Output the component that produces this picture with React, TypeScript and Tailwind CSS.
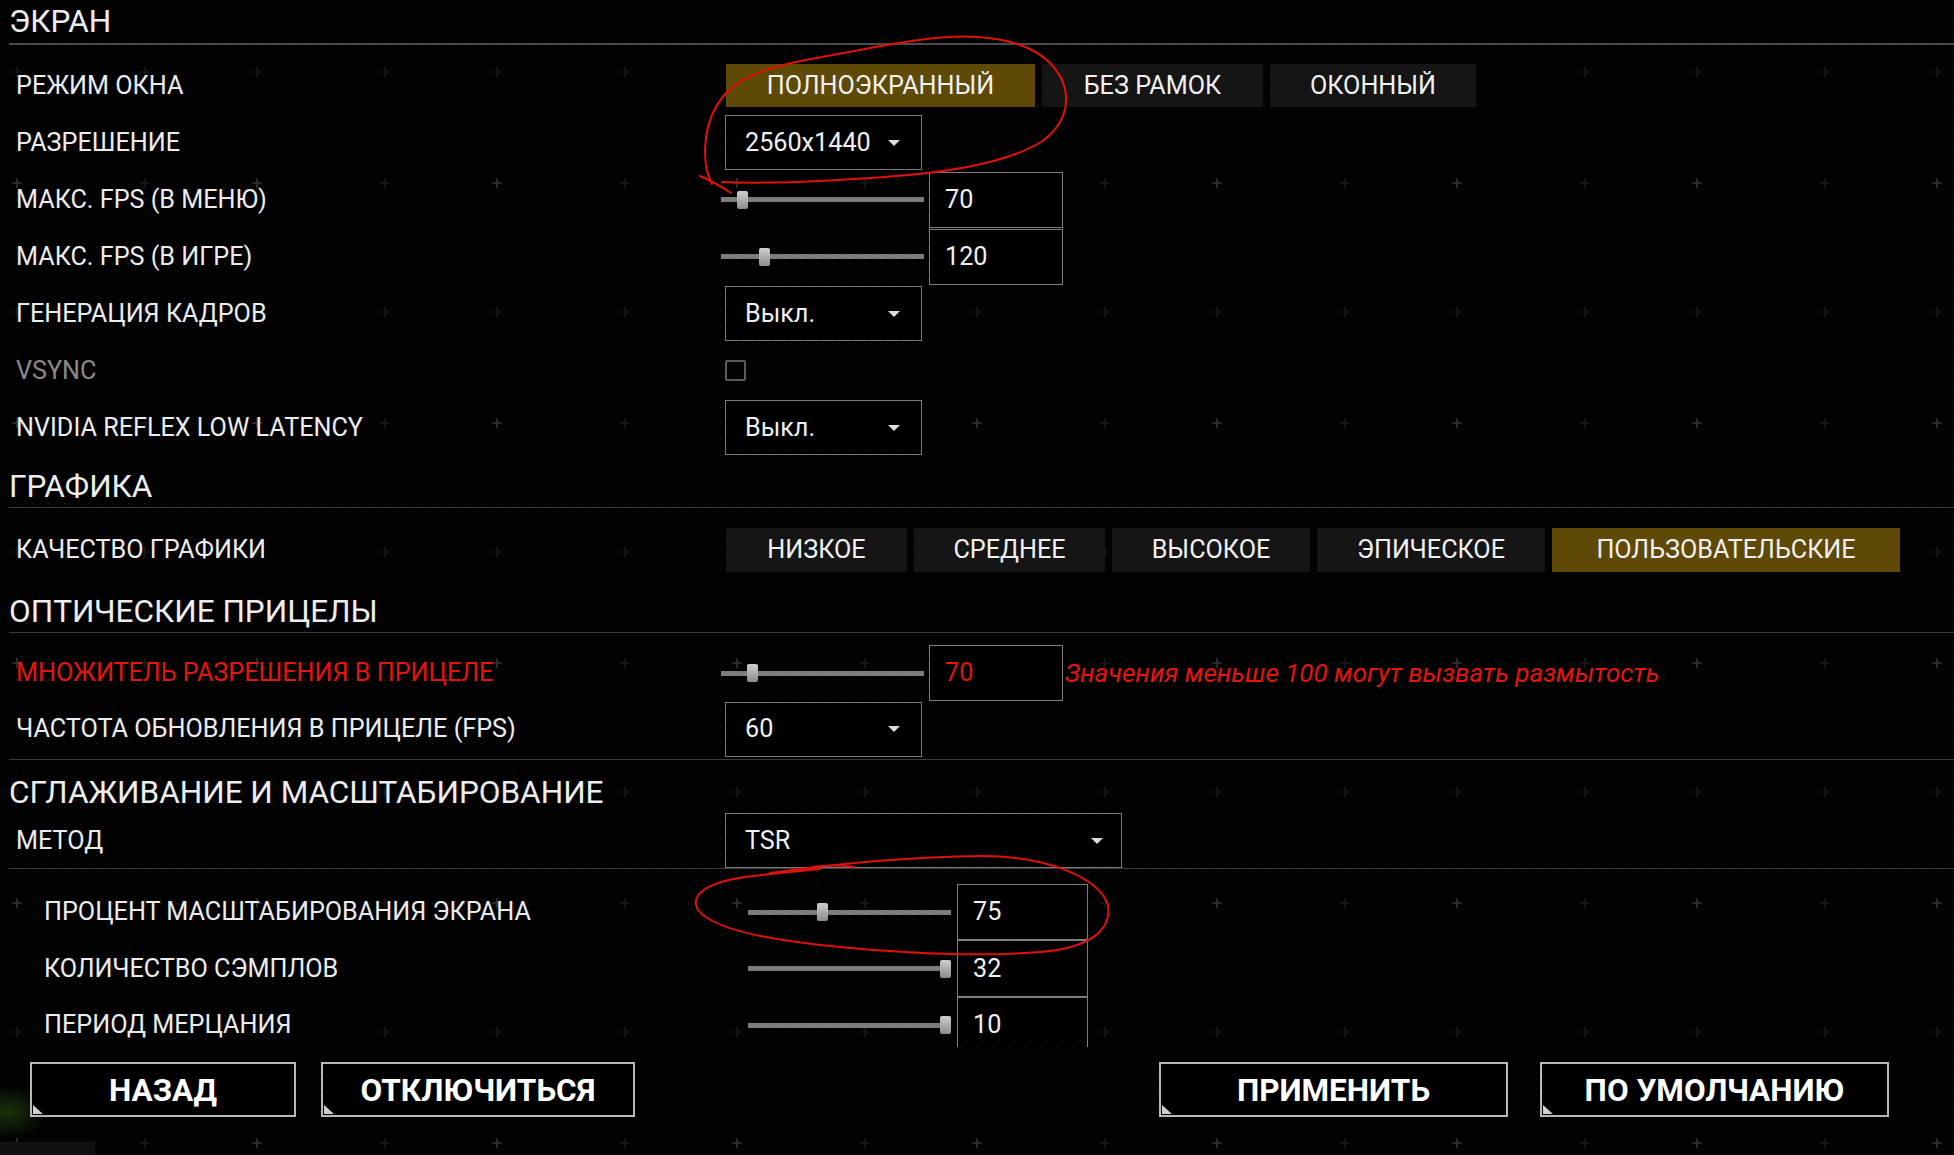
import React from "react";

type RowProps = {
  label: string;
  labelClass?: string;
  indent?: boolean;
  h: string;
  children?: React.ReactNode;
};

function Row({ label, labelClass = "text-[#ececec]", indent, h, children }: RowProps) {
  return (
    <div className={`flex items-center shrink-0 ${h}`}>
      <div
        className={`shrink-0 text-[25.2px] leading-none whitespace-nowrap ${
          indent ? "w-[748px] pl-[44px]" : "w-[721px] pl-[16px]"
        } ${labelClass}`}
      >
        {label}
      </div>
      <div className="flex items-center h-full">{children}</div>
    </div>
  );
}

function Header({ title, h, line }: { title: string; h: string; line?: boolean }) {
  return (
    <div
      className={`shrink-0 ml-[9px] flex items-end pb-[3px] ${h} ${
        line ? "border-b border-[#3c3c3c]" : ""
      }`}
    >
      <span className="text-[31.5px] leading-[35px] text-[#ededed] whitespace-nowrap">{title}</span>
    </div>
  );
}

function Caret() {
  return (
    <span className="w-0 h-0 border-l-[6px] border-r-[6px] border-t-[6px] border-l-transparent border-r-transparent border-t-[#dcdcdc]" />
  );
}

function Dropdown({ value, wide }: { value: string; wide?: boolean }) {
  return (
    <div
      className={`ml-[4px] h-[55px] border border-[#7a7a7a] flex items-center justify-between pl-[19px] ${
        wide ? "w-[397px] pr-[18px]" : "w-[197px] pr-[21px]"
      } text-[25.2px] text-[#f0f0f0] bg-black`}
    >
      <span>{value}</span>
      <Caret />
    </div>
  );
}

function Slider({ pos }: { pos: number }) {
  return (
    <div className="relative w-[203px] h-[18px] flex items-center">
      <div className="w-full h-[5px] bg-[#7c7c7c]" />
      <div
        className="absolute top-0 w-[11px] h-[18px] rounded-[2px] bg-linear-to-b from-[#cfcfcf] to-[#8c8c8c]"
        style={{ left: pos }}
      />
    </div>
  );
}

function ValueBox({ value, red, w = "w-[134px]", h = "h-[56px]" }: { value: string; red?: boolean; w?: string; h?: string }) {
  return (
    <div
      className={`${w} ${h} border border-[#7e7e7e] flex items-center pl-[15px] text-[25.2px] bg-black ${
        red ? "text-[#e3150f]" : "text-[#f0f0f0]"
      }`}
    >
      {value}
    </div>
  );
}

function Seg({ text, w, active, h = "h-[43px]" }: { text: string; w: string; active?: boolean; h?: string }) {
  return (
    <div
      className={`${w} ${h} flex items-center justify-center text-[25.2px] text-[#f0f0f0] ${
        active ? "bg-[#5e4906]" : "bg-[#151515]"
      }`}
    >
      {text}
    </div>
  );
}

function FootButton({ text, w }: { text: string; w: string }) {
  return (
    <div
      className={`relative ${w} h-[55px] border-2 border-[#b8b8b8] bg-black flex items-center justify-center pt-[3px] text-[31.5px] font-bold text-white`}
    >
      {text}
      <span className="absolute left-[1px] bottom-[1px] w-[10px] h-[9px] bg-[#cfcfcf] [clip-path:polygon(0_0,0_100%,100%_100%)]" />
    </div>
  );
}

export default function App() {
  return (
    <div className="relative w-[1954px] h-[1155px] overflow-hidden bg-[#020202] font-['Roboto',sans-serif]">
      {/* background dot grid and plus markers */}
      <svg className="absolute inset-0 w-full h-full pointer-events-none" width="1954" height="1155">
        <defs>
          <pattern id="dots" width="16" height="16" patternUnits="userSpaceOnUse" x="0" y="7">
            <rect x="0" y="0" width="1.5" height="1.5" fill="#1b1b1b" />
          </pattern>
          <pattern id="plus" width="240" height="240" patternUnits="userSpaceOnUse" x="9" y="175">
            <path d="M8 3 V13 M3 8 H13" stroke="#333333" strokeWidth="1.6" />
            <path
              d="M136 3 V13 M131 8 H141 M8 132 V142 M3 137 H13 M136 132 V142 M131 137 H141"
              stroke="#171717"
              strokeWidth="1.6"
            />
          </pattern>
          <radialGradient id="glow" cx="0.5" cy="0.5" r="0.5">
            <stop offset="0" stopColor="#2d5a12" stopOpacity="0.55" />
            <stop offset="1" stopColor="#2d5a12" stopOpacity="0" />
          </radialGradient>
        </defs>
        <rect width="1954" height="1155" fill="url(#dots)" />
        <rect width="1954" height="1155" fill="url(#plus)" />
        <ellipse cx="8" cy="1112" rx="40" ry="26" fill="url(#glow)" />
        <rect x="0" y="1142" width="95" height="13" fill="#111111" />
      </svg>

      <div className="relative flex flex-col h-full">
        <div className="h-[1047px] overflow-hidden flex flex-col shrink-0">
          {/* ЭКРАН */}
          <div className="shrink-0 ml-[9px] h-[45px] flex items-end pb-[4px] border-b-2 border-[#4c4c4c]">
            <span className="text-[31.5px] leading-[35px] text-[#ededed]">ЭКРАН</span>
          </div>
          <div className="h-[12px] shrink-0" />

          <Row label="РЕЖИМ ОКНА" h="h-[57px]">
            <div className="ml-[5px] flex gap-[7px]">
              <Seg text="ПОЛНОЭКРАННЫЙ" w="w-[309px]" active />
              <Seg text="БЕЗ РАМОК" w="w-[221px]" />
              <Seg text="ОКОННЫЙ" w="w-[206px]" />
            </div>
          </Row>
          <Row label="РАЗРЕШЕНИЕ" h="h-[57px]">
            <Dropdown value="2560x1440" />
          </Row>
          <Row label="МАКС. FPS (В МЕНЮ)" h="h-[57px]">
            <div className="flex items-center gap-[5px]">
              <Slider pos={16} />
              <ValueBox value="70" />
            </div>
          </Row>
          <Row label="МАКС. FPS (В ИГРЕ)" h="h-[57px]">
            <div className="flex items-center gap-[5px]">
              <Slider pos={38} />
              <ValueBox value="120" />
            </div>
          </Row>
          <Row label="ГЕНЕРАЦИЯ КАДРОВ" h="h-[57px]">
            <Dropdown value="Выкл." />
          </Row>
          <Row label="VSYNC" labelClass="text-[#8a8a8a]" h="h-[57px]">
            <div className="ml-[4px] w-[21px] h-[21px] border-2 border-[#5a5a5a] rounded-[2px]" />
          </Row>
          <Row label="NVIDIA REFLEX LOW LATENCY" h="h-[57px]">
            <Dropdown value="Выкл." />
          </Row>

          {/* ГРАФИКА */}
          <Header title="ГРАФИКА" h="h-[52px]" line />
          <div className="h-[20px] shrink-0" />
          <Row label="КАЧЕСТВО ГРАФИКИ" h="h-[44px]">
            <div className="ml-[5px] flex gap-[7px]">
              <Seg text="НИЗКОЕ" w="w-[181px]" h="h-[44px]" />
              <Seg text="СРЕДНЕЕ" w="w-[191px]" h="h-[44px]" />
              <Seg text="ВЫСОКОЕ" w="w-[198px]" h="h-[44px]" />
              <Seg text="ЭПИЧЕСКОЕ" w="w-[228px]" h="h-[44px]" />
              <Seg text="ПОЛЬЗОВАТЕЛЬСКИЕ" w="w-[348px]" h="h-[44px]" active />
            </div>
          </Row>

          {/* ОПТИЧЕСКИЕ ПРИЦЕЛЫ */}
          <Header title="ОПТИЧЕСКИЕ ПРИЦЕЛЫ" h="h-[61px]" line />
          <div className="h-[12px] shrink-0" />
          <Row label="МНОЖИТЕЛЬ РАЗРЕШЕНИЯ В ПРИЦЕЛЕ" labelClass="text-[#e3150f]" h="h-[56px]">
            <div className="flex items-center gap-[5px]">
              <Slider pos={26} />
              <ValueBox value="70" red />
              <span className="ml-[-3px] text-[26px] italic text-[#e3150f] whitespace-nowrap">
                Значения меньше 100 могут вызвать размытость
              </span>
            </div>
          </Row>
          <Row label="ЧАСТОТА ОБНОВЛЕНИЯ В ПРИЦЕЛЕ (FPS)" h="h-[56px]">
            <Dropdown value="60" />
          </Row>
          <div className="shrink-0 h-[3px] ml-[9px] border-b border-[#3c3c3c]" />

          {/* СГЛАЖИВАНИЕ И МАСШТАБИРОВАНИЕ */}
          <Header title="СГЛАЖИВАНИЕ И МАСШТАБИРОВАНИЕ" h="h-[53px]" />
          <Row label="МЕТОД" h="h-[55px]">
            <Dropdown value="TSR" wide />
          </Row>
          <div className="shrink-0 ml-[9px] border-b border-[#3c3c3c]" />
          <div className="h-[15px] shrink-0" />
          <Row label="ПРОЦЕНТ МАСШТАБИРОВАНИЯ ЭКРАНА" indent h="h-[56px]">
            <div className="flex items-center gap-[6px]">
              <Slider pos={69} />
              <ValueBox value="75" w="w-[131px]" />
            </div>
          </Row>
          <Row label="КОЛИЧЕСТВО СЭМПЛОВ" indent h="h-[57px]">
            <div className="flex items-center gap-[6px]">
              <Slider pos={192} />
              <ValueBox value="32" w="w-[131px]" h="h-[57px]" />
            </div>
          </Row>
          <Row label="ПЕРИОД МЕРЦАНИЯ" indent h="h-[56px]">
            <div className="flex items-center gap-[6px]">
              <Slider pos={192} />
              <ValueBox value="10" w="w-[131px]" />
            </div>
          </Row>
        </div>

        {/* footer buttons */}
        <div className="flex pt-[15px] shrink-0">
          <div className="ml-[30px] flex gap-[25px]">
            <FootButton text="НАЗАД" w="w-[266px]" />
            <FootButton text="ОТКЛЮЧИТЬСЯ" w="w-[314px]" />
          </div>
          <div className="ml-auto mr-[65px] flex gap-[32px]">
            <FootButton text="ПРИМЕНИТЬ" w="w-[349px]" />
            <FootButton text="ПО УМОЛЧАНИЮ" w="w-[349px]" />
          </div>
        </div>
      </div>

      {/* red hand-drawn annotations */}
      <svg className="absolute inset-0 w-full h-full pointer-events-none" width="1954" height="1155" fill="none">
        <path
          d="M731 193 C 722 187, 712 181, 700 176"
          stroke="#e0100c"
          strokeWidth="2"
          strokeLinecap="round"
        />
        <path
          d="M712 184 C 702 165, 700 122, 726 93 C 748 70, 792 62, 833 55 C 880 46, 938 34, 978 37 C 1022 40, 1050 55, 1062 80 C 1072 104, 1063 127, 1041 142 C 1010 161, 958 172, 884 177 C 830 181, 770 184, 722 182"
          stroke="#e0100c"
          strokeWidth="2"
          strokeLinecap="round"
        />
        <path d="M812 867 C 828 865, 842 865, 854 867" stroke="#e0100c" strokeWidth="2" strokeLinecap="round" />
        <path
          d="M770 873 C 820 866, 900 857, 982 856 C 1052 856, 1100 880, 1108 905 C 1112 930, 1090 948, 1040 952 C 980 957, 900 953, 830 946 C 760 939, 712 928, 698 910 C 690 896, 704 883, 745 877 C 775 873, 800 871, 820 869"
          stroke="#e0100c"
          strokeWidth="2"
          strokeLinecap="round"
        />
      </svg>
    </div>
  );
}
